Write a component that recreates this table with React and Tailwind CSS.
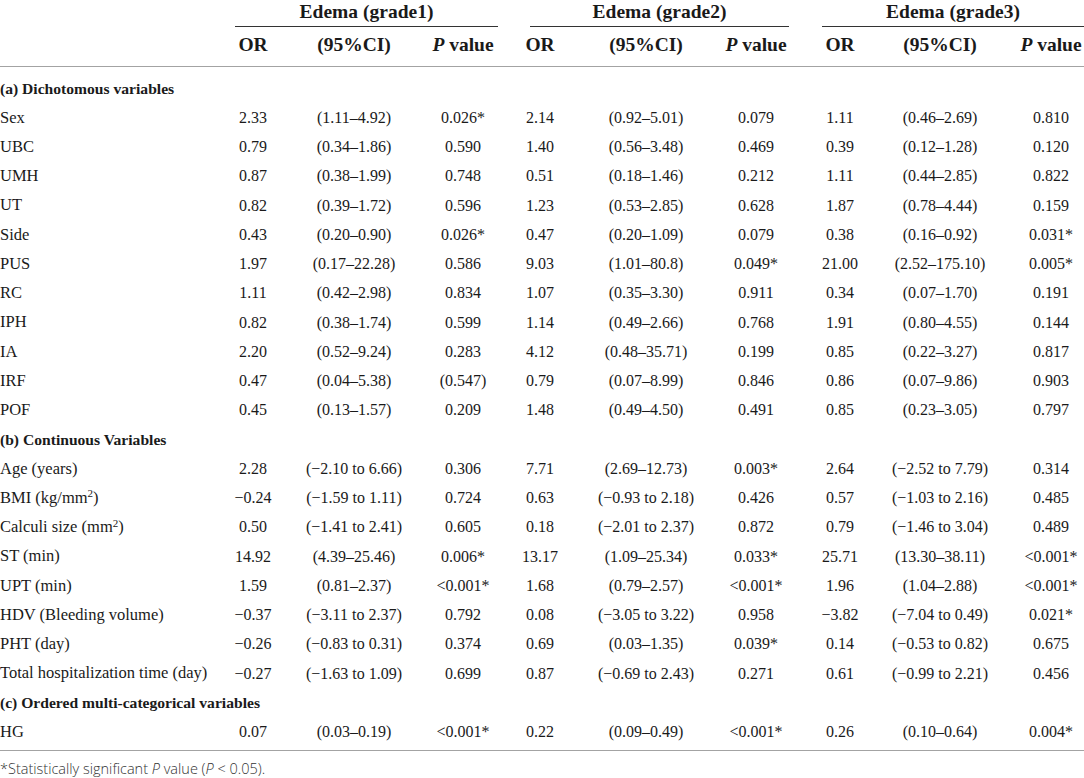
import React from "react";

const grid =
  "grid grid-cols-[213px_80px_122px_96px_58px_154px_66px_102px_98px_124px] items-center";

const rows = [
  { section: "(a) Dichotomous variables" },
  ["Sex", "2.33", "(1.11–4.92)", "0.026*", "2.14", "(0.92–5.01)", "0.079", "1.11", "(0.46–2.69)", "0.810"],
  ["UBC", "0.79", "(0.34–1.86)", "0.590", "1.40", "(0.56–3.48)", "0.469", "0.39", "(0.12–1.28)", "0.120"],
  ["UMH", "0.87", "(0.38–1.99)", "0.748", "0.51", "(0.18–1.46)", "0.212", "1.11", "(0.44–2.85)", "0.822"],
  ["UT", "0.82", "(0.39–1.72)", "0.596", "1.23", "(0.53–2.85)", "0.628", "1.87", "(0.78–4.44)", "0.159"],
  ["Side", "0.43", "(0.20–0.90)", "0.026*", "0.47", "(0.20–1.09)", "0.079", "0.38", "(0.16–0.92)", "0.031*"],
  ["PUS", "1.97", "(0.17–22.28)", "0.586", "9.03", "(1.01–80.8)", "0.049*", "21.00", "(2.52–175.10)", "0.005*"],
  ["RC", "1.11", "(0.42–2.98)", "0.834", "1.07", "(0.35–3.30)", "0.911", "0.34", "(0.07–1.70)", "0.191"],
  ["IPH", "0.82", "(0.38–1.74)", "0.599", "1.14", "(0.49–2.66)", "0.768", "1.91", "(0.80–4.55)", "0.144"],
  ["IA", "2.20", "(0.52–9.24)", "0.283", "4.12", "(0.48–35.71)", "0.199", "0.85", "(0.22–3.27)", "0.817"],
  ["IRF", "0.47", "(0.04–5.38)", "(0.547)", "0.79", "(0.07–8.99)", "0.846", "0.86", "(0.07–9.86)", "0.903"],
  ["POF", "0.45", "(0.13–1.57)", "0.209", "1.48", "(0.49–4.50)", "0.491", "0.85", "(0.23–3.05)", "0.797"],
  { section: "(b) Continuous Variables" },
  ["Age (years)", "2.28", "(−2.10 to 6.66)", "0.306", "7.71", "(2.69–12.73)", "0.003*", "2.64", "(−2.52 to 7.79)", "0.314"],
  [
    <>BMI (kg/mm<sup className="text-[11px]">2</sup>)</>,
    "−0.24", "(−1.59 to 1.11)", "0.724", "0.63", "(−0.93 to 2.18)", "0.426", "0.57", "(−1.03 to 2.16)", "0.485",
  ],
  [
    <>Calculi size (mm<sup className="text-[11px]">2</sup>)</>,
    "0.50", "(−1.41 to 2.41)", "0.605", "0.18", "(−2.01 to 2.37)", "0.872", "0.79", "(−1.46 to 3.04)", "0.489",
  ],
  ["ST (min)", "14.92", "(4.39–25.46)", "0.006*", "13.17", "(1.09–25.34)", "0.033*", "25.71", "(13.30–38.11)", "<0.001*"],
  ["UPT (min)", "1.59", "(0.81–2.37)", "<0.001*", "1.68", "(0.79–2.57)", "<0.001*", "1.96", "(1.04–2.88)", "<0.001*"],
  ["HDV (Bleeding volume)", "−0.37", "(−3.11 to 2.37)", "0.792", "0.08", "(−3.05 to 3.22)", "0.958", "−3.82", "(−7.04 to 0.49)", "0.021*"],
  ["PHT (day)", "−0.26", "(−0.83 to 0.31)", "0.374", "0.69", "(0.03–1.35)", "0.039*", "0.14", "(−0.53 to 0.82)", "0.675"],
  ["Total hospitalization time (day)", "−0.27", "(−1.63 to 1.09)", "0.699", "0.87", "(−0.69 to 2.43)", "0.271", "0.61", "(−0.99 to 2.21)", "0.456"],
  { section: "(c) Ordered multi-categorical variables" },
  ["HG", "0.07", "(0.03–0.19)", "<0.001*", "0.22", "(0.09–0.49)", "<0.001*", "0.26", "(0.10–0.64)", "0.004*"],
];

function SubHead() {
  return (
    <>
      <div className="text-center">OR</div>
      <div className="text-center">(95%CI)</div>
      <div className="text-center">
        <i>P</i> value
      </div>
    </>
  );
}

export default function App() {
  return (
    <div className="w-[1084px] h-[778px] overflow-hidden bg-white text-[#1a1a1a] font-['Liberation_Serif',serif]">
      <div className="w-[1113px]">
        {/* header */}
        <div className="border-b-[1.5px] border-[#a3a3a3] pb-[6px]">
          <div className={`${grid} text-[19.5px] font-bold h-[27px]`}>
            <div />
            <div className="col-span-3 ml-[22px] mr-[13px] border-b-[1.5px] border-[#333] text-center leading-[24px] h-[27px]">
              Edema (grade1)
            </div>
            <div className="col-span-3 ml-[19px] border-b-[1.5px] border-[#333] text-center leading-[24px] h-[27px]">
              Edema (grade2)
            </div>
            <div className="col-span-3 ml-[33px] mr-[29px] border-b-[1.5px] border-[#333] text-center leading-[24px] h-[27px]">
              Edema (grade3)
            </div>
          </div>
          <div className={`${grid} text-[19.5px] font-bold h-[33px] pt-[3px]`}>
            <div />
            <SubHead />
            <SubHead />
            <SubHead />
          </div>
        </div>

        {/* body */}
        <div className="pt-[7px] pb-[3px] border-b-[1.5px] border-[#a3a3a3]">
          {rows.map((r, i) =>
            r.section ? (
              <div key={i} className="h-[29.25px] flex items-center text-[15.6px] font-bold">
                {r.section}
              </div>
            ) : (
              <div key={i} className={`${grid} h-[29.25px]`}>
                <div className="text-[16.5px] whitespace-nowrap">{r[0]}</div>
                {r.slice(1).map((c, j) => (
                  <div key={j} className="text-center text-[16px] whitespace-nowrap">
                    {c}
                  </div>
                ))}
              </div>
            )
          )}
        </div>

        <div className="pt-[8px] text-[14.5px] leading-[20px] font-light text-[#333] font-['Open_Sans',sans-serif]">
          *Statistically significant <i>P</i> value (<i>P</i> &lt; 0.05).
        </div>
      </div>
    </div>
  );
}
